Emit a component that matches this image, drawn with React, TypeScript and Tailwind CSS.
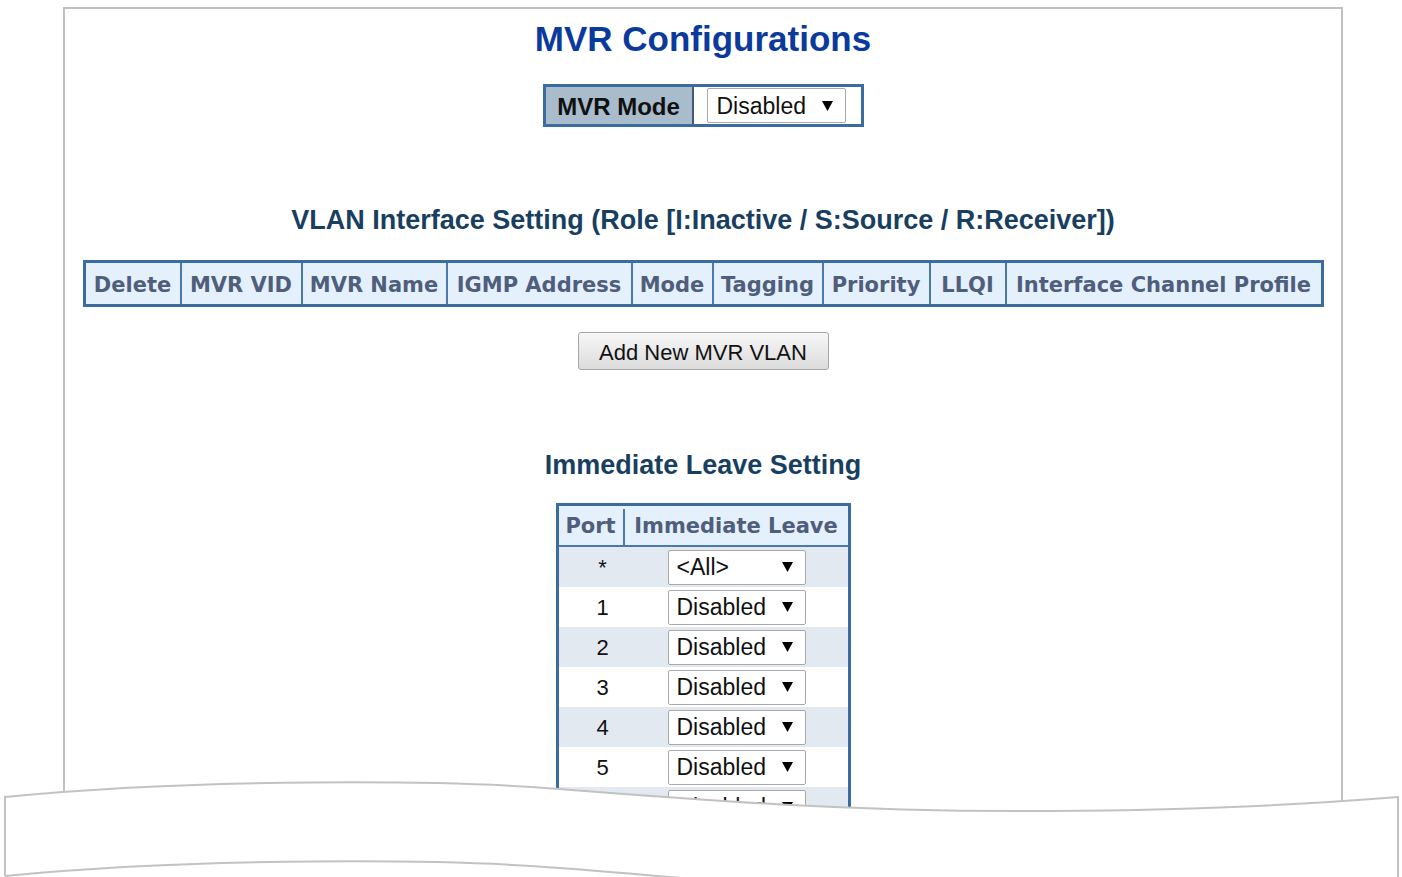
const headCols: { label: string; w: string }[] = [
  { label: 'Delete', w: 'w-[94px]' },
  { label: 'MVR VID', w: 'w-[121px]' },
  { label: 'MVR Name', w: 'w-[145px]' },
  { label: 'IGMP Address', w: 'w-[185px]' },
  { label: 'Mode', w: 'w-[81px]' },
  { label: 'Tagging', w: 'w-[110px]' },
  { label: 'Priority', w: 'w-[107px]' },
  { label: 'LLQI', w: 'w-[76px]' },
  { label: 'Interface Channel Profile', w: 'w-[316px]' },
];

const ports = ['*', '1', '2', '3', '4', '5', '6'];

function Arrow() {
  return (
    <svg width="11" height="10" viewBox="0 0 11 10" className="shrink-0">
      <path d="M0 0 L11 0 L5.5 10 Z" fill="#000" />
    </svg>
  );
}

function FakeSelect({ value }: { value: string }) {
  return (
    <div className="w-[138px] h-[35px] border border-[#a9a9a9] rounded-[2px] bg-white flex items-center justify-between pl-[8px] pr-[12px] font-['Liberation_Sans',Arial,sans-serif] text-[23px] text-[#111]">
      <span>{value}</span>
      <Arrow />
    </div>
  );
}

export default function App() {
  return (
    <div className="relative w-[1402px] h-[877px] overflow-hidden bg-white">
      {/* page frame */}
      <div className="ml-[63px] mt-[7px] w-[1280px] h-[900px] border-2 border-b-0 border-[#c0c0c0] flex flex-col items-center pt-[12px]">
        <h1 className="text-[35px] leading-[35px] font-bold text-[#0a3a9c] font-['Liberation_Sans',Arial,sans-serif]">
          MVR Configurations
        </h1>

        {/* MVR Mode */}
        <div className="mt-[28px] flex h-[43px] w-[321px] border-[3px] border-[#3b6ca0]">
          <div className="w-[148px] bg-[#a8bccc] flex items-center justify-center pt-[2px] font-['Liberation_Sans',Arial,sans-serif] font-bold text-[24px] text-[#111] border-r-2 border-[#3d5a78]">
            MVR Mode
          </div>
          <div className="flex-1 bg-white flex items-center pl-[13px]">
            <div className="w-[139px] h-[35px] pt-[1px] border border-[#a9a9a9] rounded-[2px] flex items-center justify-between pl-[9px] pr-[12px] font-['Liberation_Sans',Arial,sans-serif] text-[23px] text-[#111]">
              <span>Disabled</span>
              <Arrow />
            </div>
          </div>
        </div>

        <h2 className="mt-[78px] h-[30px] leading-[30px] text-[27px] font-bold text-[#183f5f] font-['Liberation_Sans',Arial,sans-serif]">
          VLAN Interface Setting (Role [I:Inactive / S:Source / R:Receiver])
        </h2>

        {/* VLAN table header */}
        <div className="mt-[25px] flex border-[3px] border-[#3b6ca0] bg-[#e5f0fd]">
          {headCols.map((c, i) => (
            <div
              key={c.label}
              className={`${c.w} h-[41px] pt-[4px] flex items-center justify-center whitespace-nowrap font-['DejaVu_Sans',Verdana,sans-serif] font-bold text-[21px] text-[#4f5e7b] ${i > 0 ? 'border-l-2 border-[#4a7aac]' : ''}`}
            >
              {c.label}
            </div>
          ))}
        </div>

        <button className="mt-[25px] w-[251px] h-[38px] pt-[2px] border border-[#a5a5a5] rounded-[3px] bg-gradient-to-b from-[#f7f7f7] to-[#dcdcdc] font-['Liberation_Sans',Arial,sans-serif] text-[22px] text-[#111]">
          Add New MVR VLAN
        </button>

        <h2 className="mt-[80px] h-[30px] leading-[30px] text-[27px] font-bold text-[#183f5f] font-['Liberation_Sans',Arial,sans-serif]">
          Immediate Leave Setting
        </h2>

        {/* Immediate leave table */}
        <div className="mt-[23px] w-[295px] border-[3px] border-[#3b6ca0]">
          <div className="flex h-[41px] pt-[3px] bg-[#e5f0fd] border-b-2 border-[#4a7aac] font-['DejaVu_Sans',Verdana,sans-serif] font-bold text-[21px] text-[#4f5e7b]">
            <div className="w-[66px] flex items-center justify-center border-r-2 border-[#4a7aac]">Port</div>
            <div className="flex-1 flex items-center justify-center whitespace-nowrap">Immediate Leave</div>
          </div>
          {ports.map((p, i) => (
            <div key={p} className={`flex h-[40px] ${i % 2 === 0 ? 'bg-[#e3e9f0]' : 'bg-white'}`}>
              <div className="w-[88px] flex items-center justify-center font-['Liberation_Sans',Arial,sans-serif] text-[22px] text-[#111]">
                {p}
              </div>
              <div className="flex-1 flex items-center pl-[21px]">
                <FakeSelect value={p === '*' ? '<All>' : 'Disabled'} />
              </div>
            </div>
          ))}
        </div>
      </div>

      {/* torn-page edge drawn over the bottom */}
      <svg className="absolute left-0 top-0 pointer-events-none" width="1402" height="877" viewBox="0 0 1402 877">
        <path
          d="M5 797 C 200 778 450 780 560 789 C 700 800 850 812 1050 811 C 1200 810 1300 805 1398 797 L 1398 900 L 5 900 Z"
          fill="#fff"
        />
        <path
          d="M5 876 L 5 797 C 200 778 450 780 560 789 C 700 800 850 812 1050 811 C 1200 810 1300 805 1398 797 L 1398 877"
          fill="none"
          stroke="#c2c2c2"
          strokeWidth="2"
        />
        <path
          d="M5 876 C 200 857 450 859 560 868 C 650 875 700 880 760 884"
          fill="none"
          stroke="#c2c2c2"
          strokeWidth="2"
        />
      </svg>
    </div>
  );
}
